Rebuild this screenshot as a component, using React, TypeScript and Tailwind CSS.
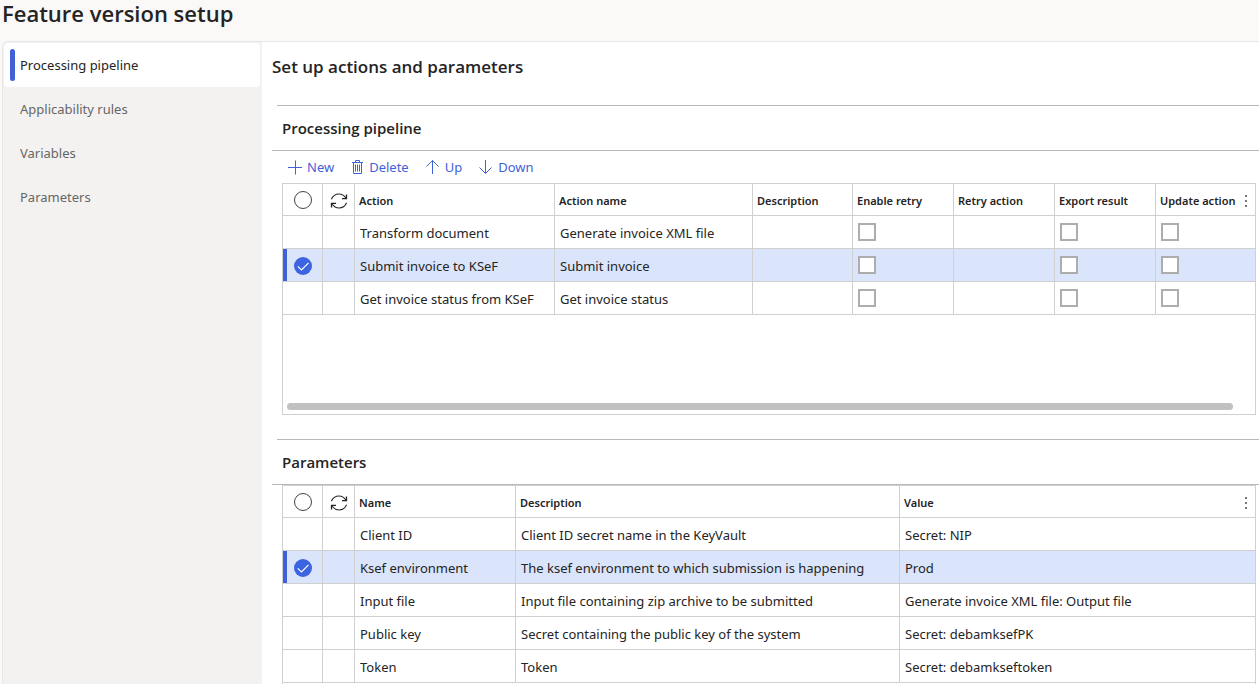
import { useState, type ReactNode } from "react";

const navItems = ["Processing pipeline", "Applicability rules", "Variables", "Parameters"];

const actions = [
  { action: "Transform document", name: "Generate invoice XML file" },
  { action: "Submit invoice to KSeF", name: "Submit invoice" },
  { action: "Get invoice status from KSeF", name: "Get invoice status" },
];

const parameters = [
  { name: "Client ID", description: "Client ID secret name in the KeyVault", value: "Secret: NIP" },
  { name: "Ksef environment", description: "The ksef environment to which submission is happening", value: "Prod" },
  { name: "Input file", description: "Input file containing zip archive to be submitted", value: "Generate invoice XML file: Output file" },
  { name: "Public key", description: "Secret containing the public key of the system", value: "Secret: debamksefPK" },
  { name: "Token", description: "Token", value: "Secret: debamkseftoken" },
];

function PlusIcon() {
  return (
    <svg className="h-4 w-[14px]" viewBox="0 0 14 16" fill="none" stroke="currentColor" aria-hidden="true">
      <path d="M0 8.5h14M7.5 1.5v14" />
    </svg>
  );
}

function TrashIcon() {
  return (
    <svg className="h-4 w-[13px]" viewBox="0 0 13 16" fill="none" stroke="currentColor" aria-hidden="true">
      <path d="M1 3.5h11M4.5 3.5v-2h4v2M2.5 3.5v11h8v-11M4.5 5.5v7M6.5 5.5v7M8.5 5.5v7" />
    </svg>
  );
}

function ArrowIcon({ down = false }: { down?: boolean }) {
  return (
    <svg className="h-4 w-[14px]" viewBox="0 0 14 16" fill="none" stroke="currentColor" aria-hidden="true">
      {down ? <path d="M6.5 1v13.5M.5 8.5l6 6 6-6" /> : <path d="M6.5 15V1.5M.5 7.5l6-6 6 6" />}
    </svg>
  );
}

function RefreshIcon() {
  return (
    <svg className="h-4 w-[18px]" viewBox="0 0 18 16" fill="none" stroke="currentColor" aria-hidden="true">
      <path strokeWidth="1.1" d="M1.4 6.2C2.8 3 5.6 1 9 1c3 0 5.4 1.7 7 4.3M16.6 9.8C15.2 13 12.4 15 9 15c-3 0-5.4-1.7-7-4.3" />
      <path strokeWidth="1.3" d="M16.5 1.5v4.2H12M1.5 14.5v-4.2H6" />
    </svg>
  );
}

function MoreIcon() {
  return (
    <svg className="h-[14px] w-1" viewBox="0 0 4 14" fill="currentColor" aria-hidden="true">
      <path d="M1 1h2v2H1zM1 6h2v2H1zM1 11h2v2H1z" />
    </svg>
  );
}

function ToolButton({ icon, children }: { icon: ReactNode; children: ReactNode }) {
  return (
    <button type="button" className="flex items-center gap-[5px] text-[#3f62d8]">
      {icon}
      {children}
    </button>
  );
}

function Head({ children, more = false }: { children: ReactNode; more?: boolean }) {
  return (
    <th scope="col" className="h-8 border-b border-r border-[#d0d0d0] pt-[2px] pl-1 text-left text-[11px] font-semibold whitespace-nowrap last:border-r-0">
      {more ? (
        <div className="flex items-center justify-between pr-[7px]">
          {children}
          <button type="button" aria-label="Column options" className="text-[#777]">
            <MoreIcon />
          </button>
        </div>
      ) : (
        children
      )}
    </th>
  );
}

function SelectHead({ label }: { label: string }) {
  return (
    <>
      <th className="h-8 border-b border-r border-[#d0d0d0] pt-px">
        <input type="checkbox" aria-label={label} className="mx-auto block size-[18px] appearance-none rounded-full border border-[#444] bg-white" />
      </th>
      <th className="h-8 border-b border-r border-[#d0d0d0] pt-[2px]">
        <button type="button" aria-label="Refresh" className="mx-auto block w-[18px]">
          <RefreshIcon />
        </button>
      </th>
    </>
  );
}

function Cell({ children }: { children?: ReactNode }) {
  return (
    <td className="h-[33px] border-b border-r border-[#d0d0d0] pt-[2px] pl-[5px] whitespace-nowrap last:border-r-0">{children}</td>
  );
}

function BoxCell({ label }: { label: string }) {
  return (
    <td className="h-[33px] border-b border-r border-[#d0d0d0] pl-[5px] last:border-r-0">
      <input type="checkbox" aria-label={label} className="block size-[18px] appearance-none border-2 border-[#adadad] bg-white" />
    </td>
  );
}

function Row({ selected, onSelect, children }: { selected: boolean; onSelect: () => void; children: ReactNode }) {
  return (
    <tr onClick={onSelect} className={selected ? "bg-[#dae4fa]" : "bg-white"}>
      <td className={selected ? "h-[33px] border-b border-r border-[#d0d0d0] pt-[2px] shadow-[inset_4px_0_0_#3f60d6]" : "h-[33px] border-b border-r border-[#d0d0d0]"}>
        {selected && (
          <span className="mx-auto grid size-[18px] place-items-center">
            <input type="checkbox" checked readOnly aria-label="Row selected" className="col-start-1 row-start-1 size-[18px] appearance-none rounded-full bg-[#3c64e0]" />
            <svg className="pointer-events-none col-start-1 row-start-1 size-[18px]" viewBox="0 0 18 18" fill="none" stroke="white" strokeWidth="1.2" aria-hidden="true">
              <path d="M3.8 9.3l3.7 3.7 7-7.2" />
            </svg>
          </span>
        )}
      </td>
      <Cell />
      {children}
    </tr>
  );
}

function SectionHeader({ children }: { children: ReactNode }) {
  return (
    <>
      <div className="ml-[15px] border-t border-[#b8b8b8]" />
      <h3 className="ml-[10px] flex h-[45px] items-center border-b border-[#b8b8b8] pl-[10px] font-['Open_Sans',sans-serif] text-[15px] font-semibold">{children}</h3>
    </>
  );
}

export default function App() {
  const [action, setAction] = useState(1);
  const [parameter, setParameter] = useState(1);

  return (
    <div className="flex min-h-screen flex-col bg-[#faf9f8] font-['Noto_Sans','Open_Sans',sans-serif] text-[13px] leading-5 text-[#242424]">
      <header className="flex h-[41px] items-start pl-[2px]">
        <h1 className="font-['Open_Sans',sans-serif] text-[22px] leading-[26px] font-semibold">Feature version setup</h1>
      </header>
      <div className="ml-[2px] flex grow rounded-tl-md border-t border-l border-[#e8e7e6] bg-[#f3f2f1]">
        <nav className="w-[259px] shrink-0 pt-px pl-px pr-[2px]">
          {navItems.map((item, i) => (
            <a
              key={item}
              href="#"
              className={
                i === 0
                  ? "flex h-11 items-center gap-[5px] rounded bg-white pl-[6px]"
                  : "flex h-11 items-center pl-4 text-[#666]"
              }
            >
              {i === 0 && <span className="h-8 w-[5px] rounded-sm bg-[#4060d8]" />}
              {item}
            </a>
          ))}
        </nav>
        <main className="min-w-0 grow bg-white">
          <h2 className="flex h-[63px] items-start pt-3 pl-[10px] font-['Open_Sans',sans-serif] text-[17px] leading-[26px] font-semibold">Set up actions and parameters</h2>

          <section>
            <SectionHeader>Processing pipeline</SectionHeader>
            <div className="flex h-8 items-center gap-[17px] pl-[26px]">
              <ToolButton icon={<PlusIcon />}>New</ToolButton>
              <ToolButton icon={<TrashIcon />}>Delete</ToolButton>
              <ToolButton icon={<ArrowIcon />}>Up</ToolButton>
              <ToolButton icon={<ArrowIcon down />}>Down</ToolButton>
            </div>
            <div className="mr-[3px] ml-5 border border-[#d0d0d0]">
              <table className="w-full table-fixed border-separate border-spacing-0">
                <colgroup>
                  <col className="w-10" />
                  <col className="w-8" />
                  <col className="w-[200px]" />
                  <col className="w-[198px]" />
                  <col className="w-[100px]" />
                  <col className="w-[101px]" />
                  <col className="w-[101px]" />
                  <col className="w-[101px]" />
                  <col />
                </colgroup>
                <thead>
                  <tr>
                    <SelectHead label="Select all actions" />
                    <Head>Action</Head>
                    <Head>Action name</Head>
                    <Head>Description</Head>
                    <Head>Enable retry</Head>
                    <Head>Retry action</Head>
                    <Head>Export result</Head>
                    <Head more>Update action</Head>
                  </tr>
                </thead>
                <tbody>
                  {actions.map((row, i) => (
                    <Row key={row.action} selected={i === action} onSelect={() => setAction(i)}>
                      <Cell>{row.action}</Cell>
                      <Cell>{row.name}</Cell>
                      <Cell />
                      <BoxCell label="Enable retry" />
                      <Cell />
                      <BoxCell label="Export result" />
                      <BoxCell label="Update action" />
                    </Row>
                  ))}
                </tbody>
              </table>
              <div className="mt-[88px] mr-[22px] mb-1 ml-1 h-[7px] rounded-full bg-[#c1c1c1]" />
            </div>
          </section>

          <section className="mt-6">
            <SectionHeader>Parameters</SectionHeader>
            <div className="mr-[3px] ml-5 border-x border-t border-[#d0d0d0] pb-px">
              <table className="w-full table-fixed border-separate border-spacing-0">
                <colgroup>
                  <col className="w-10" />
                  <col className="w-8" />
                  <col className="w-[161px]" />
                  <col className="w-96" />
                  <col />
                </colgroup>
                <thead>
                  <tr>
                    <SelectHead label="Select all parameters" />
                    <Head>Name</Head>
                    <Head>Description</Head>
                    <Head more>Value</Head>
                  </tr>
                </thead>
                <tbody>
                  {parameters.map((row, i) => (
                    <Row key={row.name} selected={i === parameter} onSelect={() => setParameter(i)}>
                      <Cell>{row.name}</Cell>
                      <Cell>{row.description}</Cell>
                      <Cell>{row.value}</Cell>
                    </Row>
                  ))}
                </tbody>
              </table>
            </div>
          </section>
        </main>
      </div>
    </div>
  );
}
